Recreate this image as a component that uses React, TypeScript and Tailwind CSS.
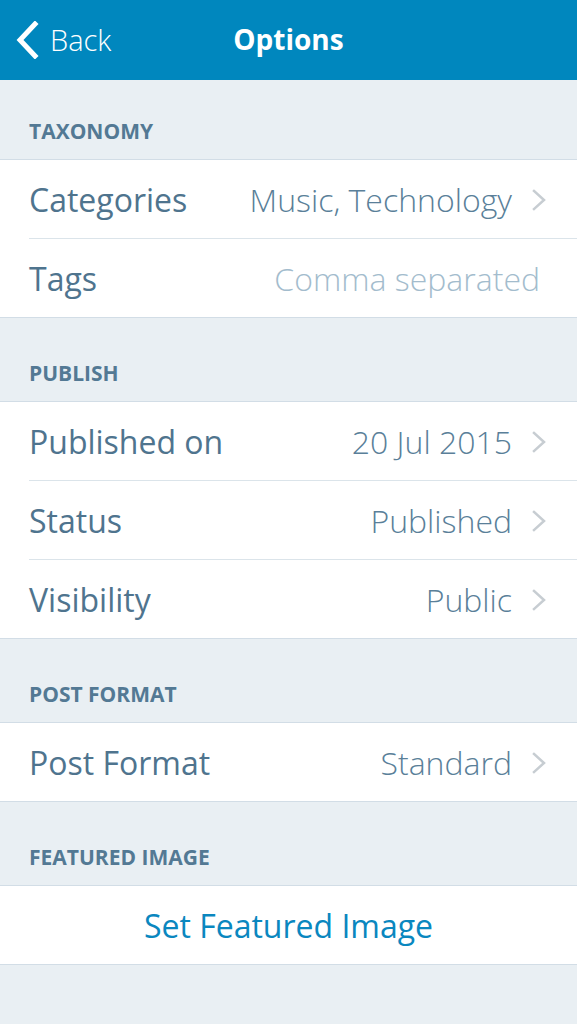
import React from "react";

const Chevron = () => (
  <svg width="15" height="22" viewBox="0 0 15 22" className="ml-[20px] shrink-0">
    <path d="M2 2 L12 11 L2 20" fill="none" stroke="#c7cdd2" strokeWidth="2.5" strokeLinecap="square" />
  </svg>
);

const SectionHeader = ({ title, first }: { title: string; first?: boolean }) => (
  <div
    className={`${first ? "h-[80px]" : "h-[84px]"} flex items-end pl-[29px] pb-[12px] border-b border-[#d2dde6] text-[21px] font-bold text-[#537994]`}
  >
    {title}
  </div>
);

const Row = ({
  label,
  value,
  chevron = true,
  placeholder,
  last,
}: {
  label: string;
  value: string;
  chevron?: boolean;
  placeholder?: boolean;
  last?: boolean;
}) => (
  <div className="bg-white pl-[29px]">
    <div
      className={`${last ? "h-[78px]" : "h-[79px] border-b border-[#dbe4ea]"} flex items-center pr-[30px] pt-[2px]`}
    >
      <span className="text-[32px] text-[#4f748e] font-normal">{label}</span>
      <span
        className={`ml-auto text-[32px] font-light ${placeholder ? "text-[#a3bccd] pr-[7px]" : "text-[#5a7f99]"}`}
      >
        {value}
      </span>
      {chevron && <Chevron />}
    </div>
  </div>
);

export default function App() {
  return (
    <div
      className="w-[577px] h-[1024px] bg-[#e9eff3] overflow-hidden"
      style={{ fontFamily: '"Open Sans", "Noto Sans", sans-serif' }}
    >
      <div className="h-[80px] bg-[#0087be] relative flex items-center justify-center">
        <div className="absolute left-[15px] top-0 h-full flex items-center">
          <svg width="24" height="38" viewBox="0 0 24 38">
            <path d="M20 3 L5 19 L20 35" fill="none" stroke="#ffffff" strokeWidth="5" strokeLinecap="square" />
          </svg>
          <span className="ml-[11px] text-[29px] font-light text-white">Back</span>
        </div>
        <span className="text-[28px] font-bold text-white mb-[2px]">Options</span>
      </div>

      <SectionHeader title="TAXONOMY" first />
      <div className="border-b border-[#d2dde6]">
        <Row label="Categories" value="Music, Technology" />
        <Row label="Tags" value="Comma separated" chevron={false} placeholder last />
      </div>

      <SectionHeader title="PUBLISH" />
      <div className="border-b border-[#d2dde6]">
        <Row label="Published on" value="20 Jul 2015" />
        <Row label="Status" value="Published" />
        <Row label="Visibility" value="Public" last />
      </div>

      <SectionHeader title="POST FORMAT" />
      <div className="border-b border-[#d2dde6]">
        <Row label="Post Format" value="Standard" last />
      </div>

      <SectionHeader title="FEATURED IMAGE" />
      <div className="h-[79px] bg-white border-b border-[#d2dde6] flex items-center justify-center pt-[2px]">
        <span className="text-[32px] text-[#0a87bf]">Set Featured Image</span>
      </div>
    </div>
  );
}
